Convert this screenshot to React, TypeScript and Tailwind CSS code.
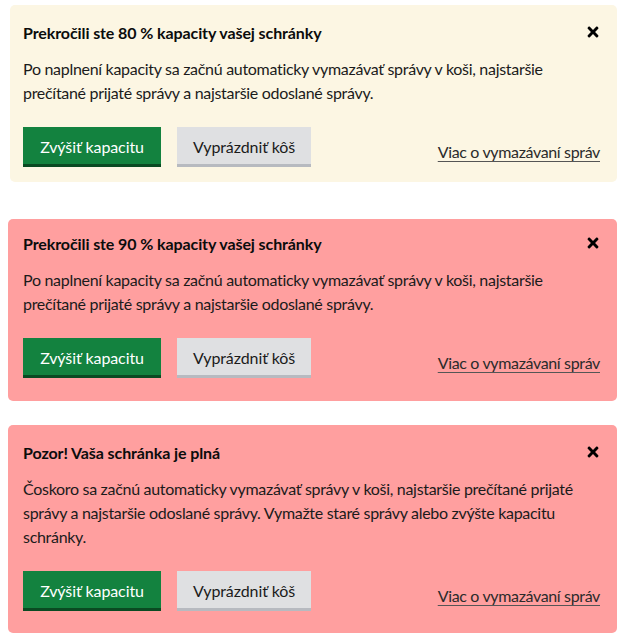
import React from "react";
import { FaTimes } from "react-icons/fa";

type CardProps = {
  bg: string;
  outer: string;
  inner: string;
  title: string;
  lines: string[];
};

function Card({ bg, outer, inner, title, lines }: CardProps) {
  return (
    <div className={`rounded-[5px] ${bg} ${outer}`}>
      <div className={`pr-[17px] ${inner}`}>
        <div className="flex items-start justify-between">
          <h2 className="text-[16px] leading-[22px] font-bold text-[#0b0c0c] tracking-[-0.1px]">{title}</h2>
          <button className="mt-[2px] mr-[-1px] text-black" aria-label="Zavrieť">
            <FaTimes size={16} />
          </button>
        </div>
        <p className="mt-[13px] text-[16px] leading-6 text-[#1b1b1b] whitespace-nowrap tracking-[-0.3px]">
          {lines.map((l, i) => (
            <React.Fragment key={i}>
              {l}
              {i < lines.length - 1 && <br />}
            </React.Fragment>
          ))}
        </p>
        <div className="mt-[22px] flex items-end justify-between">
          <div className="flex gap-4">
            <button className="h-10 w-[138px] bg-[#13823f] border-b-[3px] border-[#0a4a22] text-white text-[16px] pt-[2px] tracking-[-0.1px]">
              Zvýšiť kapacitu
            </button>
            <button className="h-10 w-[134px] bg-[#dfe0e2] border-b-[3px] border-[#b7bac0] text-[#1b1b1b] text-[16px] pt-[2px] tracking-[-0.1px]">
              Vyprázdniť kôš
            </button>
          </div>
          <a
            href="#"
            className="mb-[3px] text-[16px] leading-6 text-[#2b2b2b] underline decoration-[#555] underline-offset-[3px] tracking-[-0.35px]"
          >
            Viac o vymazávaní správ
          </a>
        </div>
      </div>
    </div>
  );
}

export default function App() {
  return (
    <div
      className="w-[617px] h-[635px] bg-white overflow-hidden pt-[5px]"
      style={{ fontFamily: "Lato, 'Noto Sans', sans-serif" }}
    >
      <Card
        bg="bg-[#fcf6e3]"
        outer="ml-[10px]"
        inner="pl-[13px] pt-[17px] pb-[15px]"
        title="Prekročili ste 80 % kapacity vašej schránky"
        lines={[
          "Po naplnení kapacity sa začnú automaticky vymazávať správy v koši, najstaršie",
          "prečítané prijaté správy a najstaršie odoslané správy.",
        ]}
      />
      <div className="h-[37px]" />
      <Card
        bg="bg-[#ff9f9f]"
        outer="ml-[8px]"
        inner="pl-[15px] pt-[14px] pb-[23px]"
        title="Prekročili ste 90 % kapacity vašej schránky"
        lines={[
          "Po naplnení kapacity sa začnú automaticky vymazávať správy v koši, najstaršie",
          "prečítané prijaté správy a najstaršie odoslané správy.",
        ]}
      />
      <div className="h-[24px]" />
      <Card
        bg="bg-[#ff9f9f]"
        outer="ml-[8px]"
        inner="pl-[15px] pt-[17px] pb-[22px]"
        title="Pozor! Vaša schránka je plná"
        lines={[
          "Čoskoro sa začnú automaticky vymazávať správy v koši, najstaršie prečítané prijaté",
          "správy a najstaršie odoslané správy. Vymažte staré správy alebo zvýšte kapacitu",
          "schránky.",
        ]}
      />
    </div>
  );
}
